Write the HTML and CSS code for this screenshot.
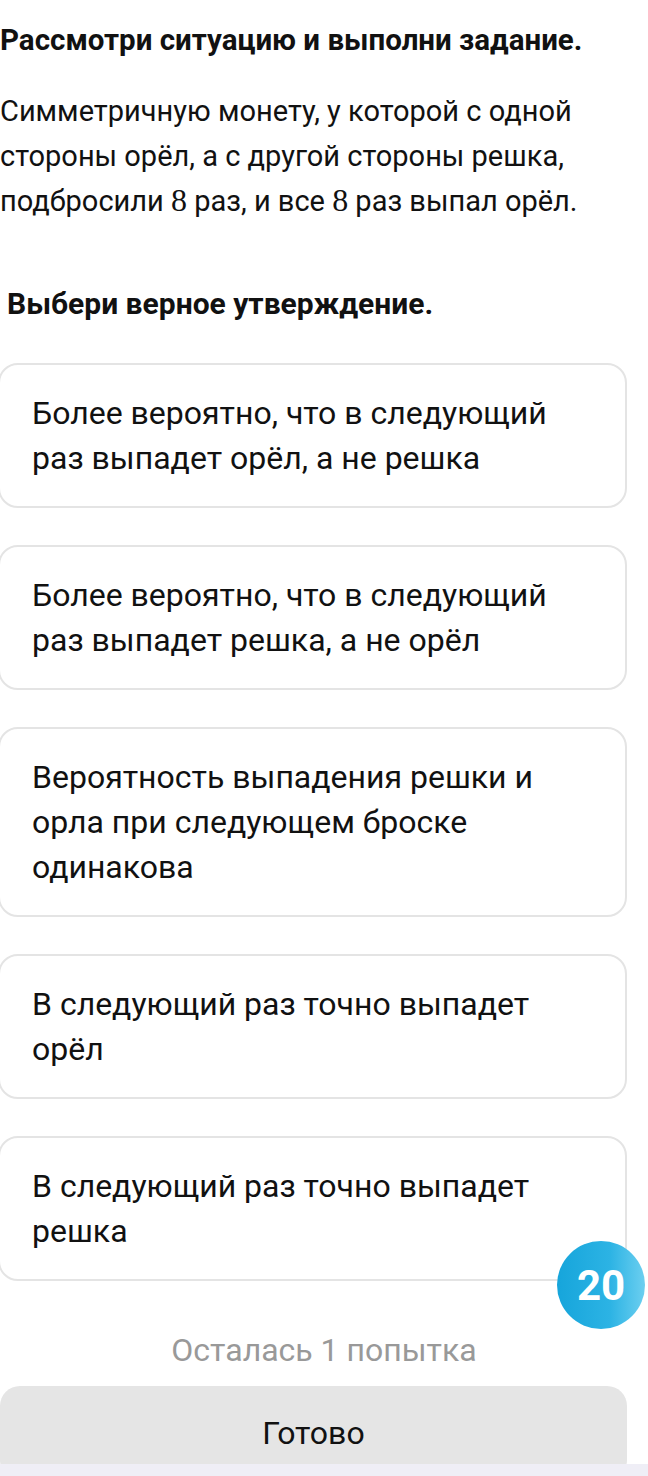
FILE: index.html
```html
<!DOCTYPE html>
<html lang="ru">
<head>
    <meta charset="UTF-8">
    <meta name="viewport" content="width=device-width, initial-scale=1.0">
    <title>Задание</title>
    <link rel="stylesheet" href="styles.css">
</head>
<body>
    <main class="task">
        <h2 class="task-title">Рассмотри ситуацию и выполни задание.</h2>
        <p class="task-text">Симметричную монету, у которой с одной стороны орёл, а с другой стороны решка, подбросили <span class="num">8</span> раз, и все <span class="num">8</span> раз выпал орёл.</p>
        <h3 class="task-question">Выбери верное утверждение.</h3>

        <div class="options">
            <div class="option">Более вероятно, что в следующий раз выпадет орёл, а не решка</div>
            <div class="option">Более вероятно, что в следующий раз выпадет решка, а не орёл</div>
            <div class="option">Вероятность выпадения решки и орла при следующем броске одинакова</div>
            <div class="option">В следующий раз точно выпадет орёл</div>
            <div class="option">В следующий раз точно выпадет решка</div>
            <div class="timer">20</div>
        </div>

        <div class="attempts">Осталась 1 попытка</div>
        <button class="done-button">Готово</button>
    </main>
    <div class="bottom-bar"></div>
</body>
</html>
```

FILE: styles.css
```css
body {
    margin: 0;
    padding: 0;
    background-color: #fff;
    color: #111;
    font-family: Roboto, 'Noto Sans', sans-serif;
    overflow: hidden;
}
.task {
    height: 1464px;
    overflow: hidden;
}
.task-title {
    margin: 0;
    padding-top: 22px;
    font-size: 29.5px;
    line-height: 36px;
    font-weight: 700;
}
.task-text {
    margin: 0;
    padding-top: 31px;
    font-size: 29px;
    line-height: 45px;
    max-width: 610px;
}
.num {
    font-family: 'Liberation Serif', serif;
    font-size: 32px;
    line-height: 1;
}
.task-question {
    margin: 0;
    padding: 62px 0 0 7px;
    font-size: 30px;
    line-height: 36px;
    font-weight: 700;
}
.options {
    position: relative;
    display: flex;
    flex-direction: column;
    gap: 37px;
    margin-top: 41px;
}
.option {
    margin-left: -2px;
    width: 629px;
    box-sizing: border-box;
    padding: 26px 34px 25px 32px;
    border: 2px solid #e4e4e4;
    border-radius: 20px;
    font-size: 32px;
    line-height: 45px;
}
.timer {
    position: absolute;
    right: 3px;
    bottom: -48px;
    width: 88px;
    height: 88px;
    border-radius: 50%;
    background: linear-gradient(90deg, #16a5db 0%, #2cb3e4 60%, #6ccff0 100%);
    color: #fff;
    font-family: Roboto, sans-serif;
    font-weight: 700;
    font-size: 42px;
    display: flex;
    align-items: center;
    justify-content: center;
}
.attempts {
    margin-top: 51px;
    text-align: center;
    color: #999;
    font-size: 32px;
    line-height: 36px;
}
.done-button {
    display: block;
    margin-top: 18px;
    width: 627px;
    height: 94px;
    padding: 0;
    border: none;
    border-radius: 20px;
    background-color: #e5e5e5;
    color: #111;
    font-family: Roboto, 'Noto Sans', sans-serif;
    font-size: 32px;
}
.bottom-bar {
    height: 12px;
    background-color: #efeef6;
}
```
